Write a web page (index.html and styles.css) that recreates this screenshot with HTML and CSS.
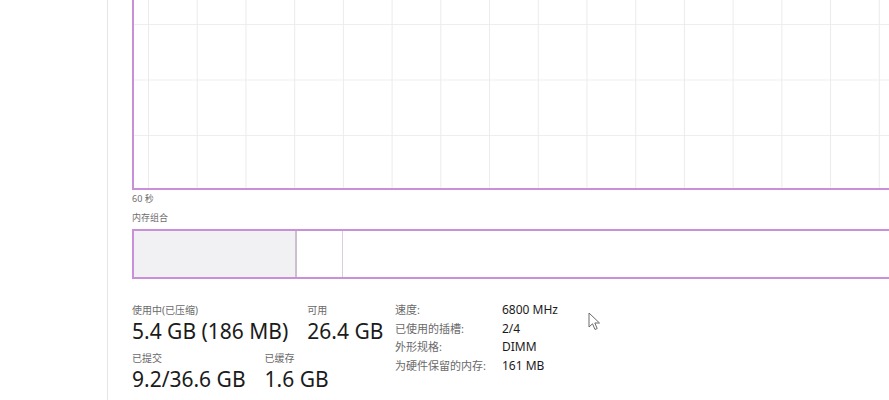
FILE: index.html
```html
<!DOCTYPE html>
<html lang="zh-CN">
<head>
    <meta charset="UTF-8">
    <meta name="viewport" content="width=device-width, initial-scale=1.0">
    <title>内存</title>
    <link rel="stylesheet" href="styles.css">
</head>
<body>
    <div class="app">
        <aside class="sidebar"></aside>

        <main class="panel">
            <!-- 内存使用量图表 -->
            <div class="chart"></div>
            <div class="axis-label">60 秒</div>

            <div class="caption">内存组合</div>
            <div class="composition">
                <div class="seg seg-used"></div>
                <div class="seg seg-modified"></div>
                <div class="seg seg-rest"></div>
            </div>

            <section class="stats">
                <div class="stats-main">
                    <div class="stat-row">
                        <div class="stat">
                            <div class="stat-label">使用中(已压缩)</div>
                            <div class="stat-value">5.4 GB (186 MB)</div>
                        </div>
                        <div class="stat">
                            <div class="stat-label">可用</div>
                            <div class="stat-value">26.4 GB</div>
                        </div>
                    </div>
                    <div class="stat-row">
                        <div class="stat">
                            <div class="stat-label">已提交</div>
                            <div class="stat-value">9.2/36.6 GB</div>
                        </div>
                        <div class="stat">
                            <div class="stat-label">已缓存</div>
                            <div class="stat-value">1.6 GB</div>
                        </div>
                    </div>
                </div>

                <dl class="details">
                    <dt>速度:</dt><dd>6800 MHz</dd>
                    <dt>已使用的插槽:</dt><dd>2/4</dd>
                    <dt>外形规格:</dt><dd>DIMM</dd>
                    <dt>为硬件保留的内存:</dt><dd>161 MB</dd>
                </dl>
            </section>
        </main>
    </div>

    <svg class="cursor" width="13" height="19" viewBox="0 0 13 19">
        <path d="M1 1 L1 15 L4.5 11.8 L7 17.5 L9.2 16.5 L6.8 11 L11.5 11 Z" fill="#ffffff" stroke="#6b6b6b" stroke-width="1" stroke-linejoin="round"/>
    </svg>
</body>
</html>
```

FILE: styles.css
```css
* {
    margin: 0;
    padding: 0;
    box-sizing: border-box;
}
body {
    font-family: "Segoe UI", "Noto Sans", "Noto Sans CJK SC", sans-serif;
    background-color: #ffffff;
    color: #1b1b1b;
    overflow: hidden;
}

.app {
    display: flex;
    height: 400px;
}

.sidebar {
    width: 108px;
    flex-shrink: 0;
    border-right: 1px solid #e6e6e6;
}

.panel {
    flex: 1;
    padding-left: 24px;
    overflow: hidden;
}

/* grid lines of the graph */
.chart {
    height: 190px;
    margin-right: -40px;
    border-left: 2px solid #c98fd9;
    border-bottom: 2px solid #c98fd9;
    background-image:
        linear-gradient(to right, #ebebeb 1px, transparent 1px),
        linear-gradient(to bottom, #eeeeee 1px, transparent 1px);
    background-size: 48.73px 100%, 100% 55.5px;
    background-position: 14px 0, 0 24px;
}

.axis-label,
.caption {
    font-size: 9px;
    line-height: 14px;
    color: #6e6e6e;
}
.axis-label {
    margin-top: 2px;
}
.caption {
    margin-top: 5px;
}

.composition {
    display: flex;
    height: 50px;
    margin-top: 4px;
    margin-right: -40px;
    border: 2px solid #c98fd9;
}
.seg-used {
    width: 163px;
    background-color: #f1f0f2;
    border-right: 2px solid #cdbfd1;
}
.seg-modified {
    width: 46px;
    border-right: 1px solid #dccbe0;
}
.seg-rest {
    flex: 1;
}

.stats {
    display: flex;
    margin-top: 24px;
}
.stats-main {
    width: 263px;
    flex-shrink: 0;
}
.stat-row {
    display: flex;
    gap: 19px;
}
.stat-row + .stat-row {
    margin-top: 6px;
}
.stat-label {
    font-size: 10px;
    line-height: 14px;
    color: #6a6a6a;
}
.stat-value {
    font-size: 21px;
    line-height: 28px;
    color: #1b1b1b;
    white-space: nowrap;
}

.details {
    display: grid;
    grid-template-columns: 107px auto;
    grid-auto-rows: 18.5px;
    margin-top: -2px;
    font-size: 11px;
    line-height: 18.5px;
}
.details dt {
    color: #6a6a6a;
}
.details dd {
    color: #1b1b1b;
    font-size: 12px;
}

.cursor {
    position: absolute;
    left: 588px;
    top: 312px;
}
```
